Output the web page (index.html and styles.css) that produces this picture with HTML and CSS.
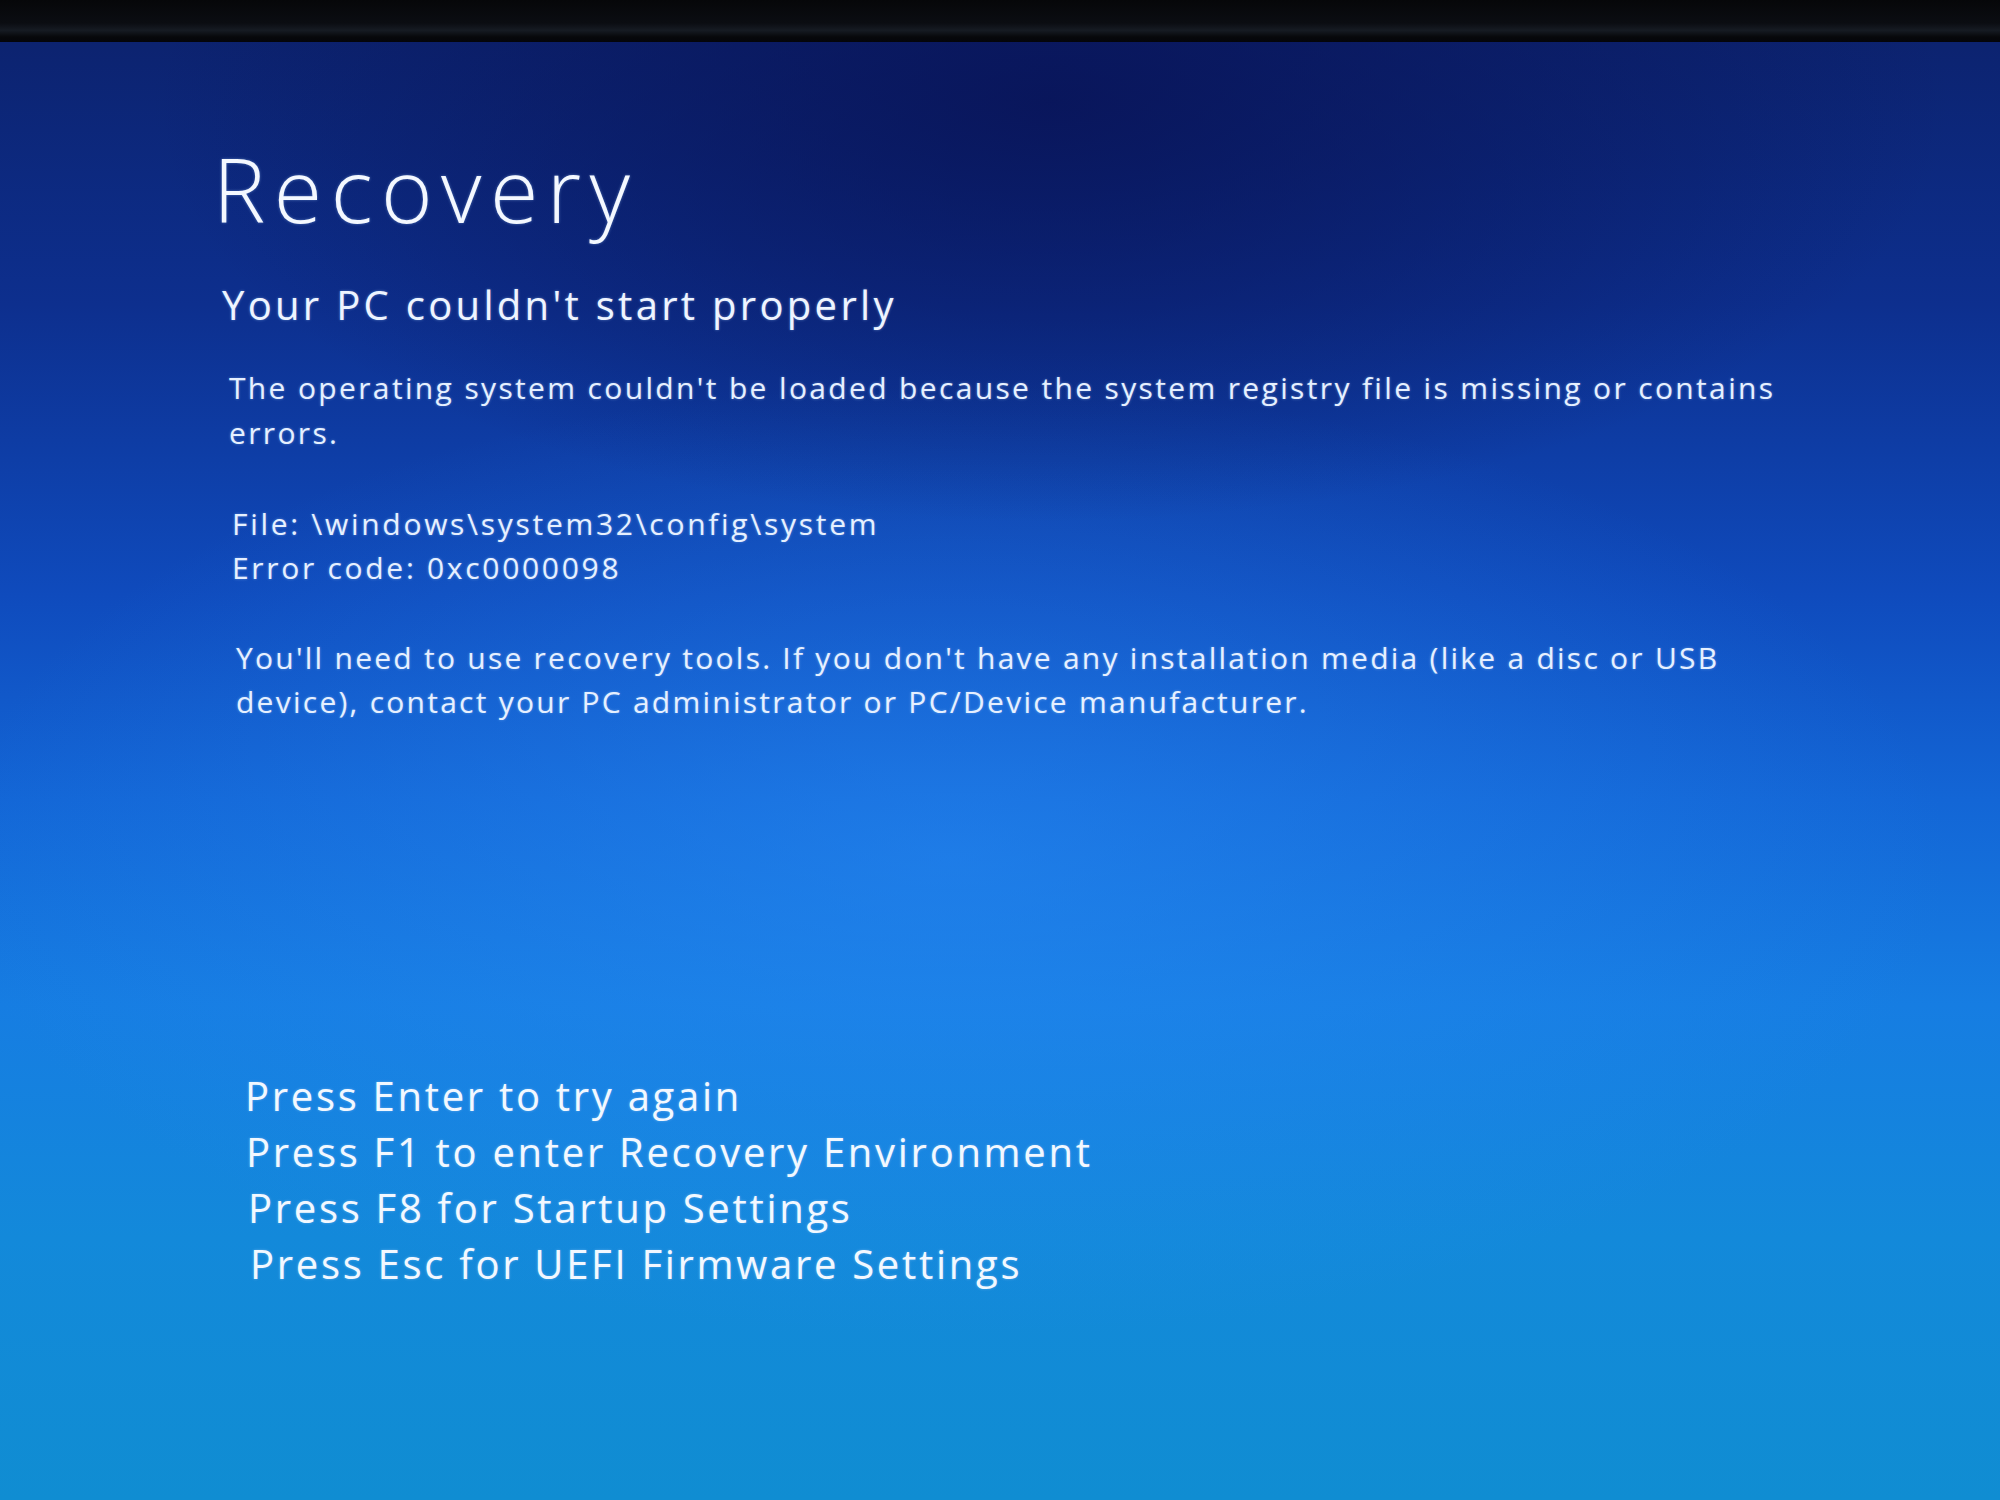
FILE: index.html
```html
<!DOCTYPE html>
<html lang="en">
<head>
<meta charset="utf-8">
<title>Recovery</title>
<link rel="stylesheet" href="styles.css">
</head>
<body>
<div class="bezel"></div>
<main class="screen">
  <h1 class="title">Recovery</h1>
  <h2 class="subtitle">Your PC couldn't start properly</h2>
  <p class="msg msg-first">The operating system couldn't be loaded because the system registry file is missing or contains<br>errors.</p>
  <p class="details">File: \windows\system32\config\system<br>Error code: 0xc0000098</p>
  <p class="msg msg-second">You'll need to use recovery tools. If you don't have any installation media (like a disc or USB<br>device), contact your PC administrator or PC/Device manufacturer.</p>
  <ul class="keys">
    <li class="key key-1">Press Enter to try again</li>
    <li class="key key-2">Press F1 to enter Recovery Environment</li>
    <li class="key key-3">Press F8 for Startup Settings</li>
    <li class="key key-4">Press Esc for UEFI Firmware Settings</li>
  </ul>
</main>
</body>
</html>
```

FILE: styles.css
```css
html, body {
  margin: 0;
  padding: 0;
  width: 2000px;
  height: 1500px;
  overflow: hidden;
  background: #050608;
}

body {
  font-family: "Open Sans", "Noto Sans", "Liberation Sans", sans-serif;
  color: #eef5ff;
}

.bezel {
  height: 42px;
  background: linear-gradient(180deg, #060709 0%, #0b0d12 55%, #161b23 72%, #07080b 88%, #04050a 100%);
}

.screen {
  height: 1458px;
  box-sizing: border-box;
  padding-top: 97px;
  background:
    radial-gradient(ellipse 900px 420px at 1050px 60px, rgba(8, 18, 85, 0.8), rgba(8, 18, 85, 0) 100%),
    radial-gradient(ellipse 1000px 480px at 950px 820px, rgba(40, 140, 245, 0.5), rgba(40, 140, 245, 0) 100%),
    linear-gradient(180deg, #0c2370 0%, #0d2f8e 18%, #0f4bbd 38%, #1366d6 52%, #167de2 66%, #1389da 82%, #108dd2 100%);
  text-shadow: 0 0 3px rgba(170, 210, 255, 0.45);
}

.title {
  margin: 0 0 0 213px;
  font-size: 88px;
  line-height: 100px;
  font-weight: 300;
  letter-spacing: 8.5px;
  color: #f4f8ff;
}

.subtitle {
  margin: 41px 0 0 222px;
  font-size: 40px;
  line-height: 50px;
  font-weight: 400;
  letter-spacing: 3.3px;
  color: #eef4ff;
}

.msg,
.details {
  font-size: 30px;
  line-height: 45px;
  color: #e6f0ff;
}

.msg-first {
  margin: 35px 0 0 229px;
  letter-spacing: 2.35px;
}

.details {
  margin: 47px 0 0 232px;
  line-height: 44px;
  letter-spacing: 2.7px;
}

.msg-second {
  margin: 46px 0 0 236px;
  line-height: 44px;
  letter-spacing: 2.25px;
}

.keys {
  list-style: none;
  margin: 344px 0 0 0;
  padding: 0;
}

.key {
  font-size: 40px;
  line-height: 56px;
  letter-spacing: 2.7px;
  color: #f2f8ff;
}

.key-1 { margin-left: 245px; }
.key-2 { margin-left: 246px; }
.key-3 { margin-left: 248px; }
.key-4 { margin-left: 250px; }
```
